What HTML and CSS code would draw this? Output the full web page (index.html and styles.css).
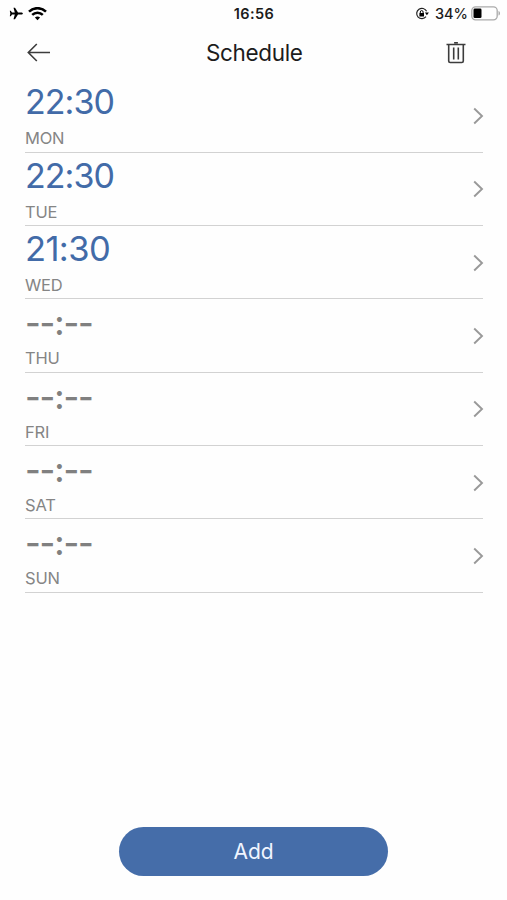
FILE: index.html
```
<!DOCTYPE html>
<html lang="en">
<head>
<meta charset="utf-8">
<title>Schedule</title>
<link rel="stylesheet" href="styles.css">
</head>
<body>
<div class="status">
  <div class="status-left">
    <svg width="14" height="13" viewBox="0 0 14 13"><path d="M13.900 6.500c0-.7-.9-1.100-1.800-1.100H9L6 .8H4.500l1.300 4.600H3L1.800 3.800H.8l.5 2.700-.5 2.700h1L3 7.600h2.800l-1.300 4.600H6L9 7.600h3.100c.9 0 1.800-.4 1.800-1.100z"/></svg>
    <svg width="19" height="14" viewBox="0 0 19 14"><g fill="none" stroke="#000" stroke-width="2.500"><path d="M1 4.600a12.200 12.200 0 0 1 17 0M4.200 7.900a7.600 7.600 0 0 1 10.600 0"/></g><path d="M6.900 10.600a3.900 3.900 0 0 1 5.200 0L9.500 13.300z"/></svg>
  </div>
  <div class="clock">16:56</div>
  <div class="status-right">
    <svg width="14" height="13" viewBox="0 0 14 13"><path d="M11.600 4.300A5.200 5.200 0 1 0 11 9.700" fill="none" stroke="#222" stroke-width="1.200"/><path d="M9.900 5.400h4l-2 2.900zM4.400 6h4.600v3.400H4.400z"/><path d="M5.300 6.200V5a1.400 1.400 0 0 1 2.800 0v1.200" fill="none" stroke="#000"/></svg>
    <span class="percent">34%</span>
    <svg width="30" height="15" viewBox="0 0 30 15"><rect x=".8" y=".8" width="25.400" height="13" rx="3.800" fill="none" stroke="#aaa" stroke-width="1.300"/><rect x="2.500" y="2.600" width="8" height="9.400" rx="1.300"/><path d="M27.500 5v4.600c2-.6 2-4 0-4.600z" fill="#aaa"/></svg>
  </div>
</div>
<header class="header">
  <svg class="back" width="24" height="20" viewBox="0 0 24 20"><path d="M23 9.500H1.500M9.800 1L1.300 9.500l8.500 8.500" /></svg>
  <h1>Schedule</h1>
  <svg class="trash" width="20" height="24" viewBox="0 0 20 24"><path d="M.5 3.500h19M2.700 3.500v16.500q0 1.500 1.500 1.500h11.600q1.500 0 1.500-1.500V3.500M7.700 6.500v12M12.300 6.500v12M8.900 2.500V1.700h2.200v.8"/></svg>
</header>
<main class="list">
  <div class="row"><div><div class="time tight">22:30</div><div class="day">MON</div></div><svg class="chevron" viewBox="0 0 11 18"><path d="M1.200 1.500L9 9l-7.800 7.500"/></svg></div>
  <div class="row"><div><div class="time tight">22:30</div><div class="day">TUE</div></div><svg class="chevron" viewBox="0 0 11 18"><path d="M1.200 1.500L9 9l-7.800 7.500"/></svg></div>
  <div class="row"><div><div class="time">21:30</div><div class="day">WED</div></div><svg class="chevron" viewBox="0 0 11 18"><path d="M1.200 1.500L9 9l-7.800 7.500"/></svg></div>
  <div class="row"><div><div class="time unset">--:--</div><div class="day">THU</div></div><svg class="chevron" viewBox="0 0 11 18"><path d="M1.200 1.500L9 9l-7.800 7.500"/></svg></div>
  <div class="row"><div><div class="time unset">--:--</div><div class="day">FRI</div></div><svg class="chevron" viewBox="0 0 11 18"><path d="M1.200 1.500L9 9l-7.800 7.500"/></svg></div>
  <div class="row"><div><div class="time unset">--:--</div><div class="day">SAT</div></div><svg class="chevron" viewBox="0 0 11 18"><path d="M1.200 1.500L9 9l-7.800 7.500"/></svg></div>
  <div class="row"><div><div class="time unset">--:--</div><div class="day">SUN</div></div><svg class="chevron" viewBox="0 0 11 18"><path d="M1.200 1.500L9 9l-7.800 7.500"/></svg></div>
</main>
<footer class="footer"><button class="add">Add</button></footer>
</body>
</html>
```
FILE: styles.css
```
* { box-sizing: border-box; }
body {
  margin: 0;
  height: 900px;
  display: flex;
  flex-direction: column;
  background: #fefefe;
  color: #1c1c1c;
  font-family: Inter, sans-serif;
  overflow: hidden;
}
svg { display: block; flex: none; }
.status {
  height: 27px;
  padding: 0 7px 0 9px;
  display: grid;
  grid-template-columns: 1fr auto 1fr;
  align-items: center;
}
.status-left, .status-right { display: flex; align-items: center; }
.status-left { gap: 5px; }
.status-right { justify-content: flex-end; margin-right: -1px; }
.clock { font-size: 14.5px; font-weight: 600; letter-spacing: 0.45px; margin-right: 1px; }
.percent { font-size: 14.5px; font-weight: 500; margin: 0 3px 0 6px; }
.header {
  height: 52px;
  padding: 0 41px 0 27px;
  display: grid;
  grid-template-columns: 179px 1fr auto;
  align-items: center;
}
.header path { fill: none; stroke: #3c3c3c; stroke-width: 1.6; }
h1 { margin: -2px 0 0; font-size: 22.5px; font-weight: 400; letter-spacing: -0.35px; }
.list { padding: 0 24px 0 25px; }
.row {
  height: 73.33px;
  border-bottom: 1.5px solid #d2d2d2;
  display: flex;
  justify-content: space-between;
  align-items: center;
}
.row:first-child { height: 73.6px; }
.time {
  height: 46px;
  line-height: 46px;
  font-size: 34.5px;
  letter-spacing: -0.6px;
  color: #426ba8;
}
.tight { font-size: 34px; letter-spacing: -0.95px; }
.unset { color: #808080; letter-spacing: -1.1px; padding-top: 1px; font-weight: 500; font-size: 34px; }
.day {
  height: 26px;
  line-height: 26px;
  font-size: 16.5px;
  letter-spacing: -0.2px;
  color: #858585;
}
.chevron { width: 11px; height: 18px; margin: 1px -1px 0 0; }
.chevron path { fill: none; stroke: #999; stroke-width: 1.9; }
.footer { margin-top: auto; padding-bottom: 24px; display: flex; justify-content: center; }
.add {
  width: 269px;
  height: 49px;
  border: 0;
  border-radius: 25px;
  background: #456da9;
  color: #f0f5ff;
  font: 400 21px Inter, sans-serif;
}
```
